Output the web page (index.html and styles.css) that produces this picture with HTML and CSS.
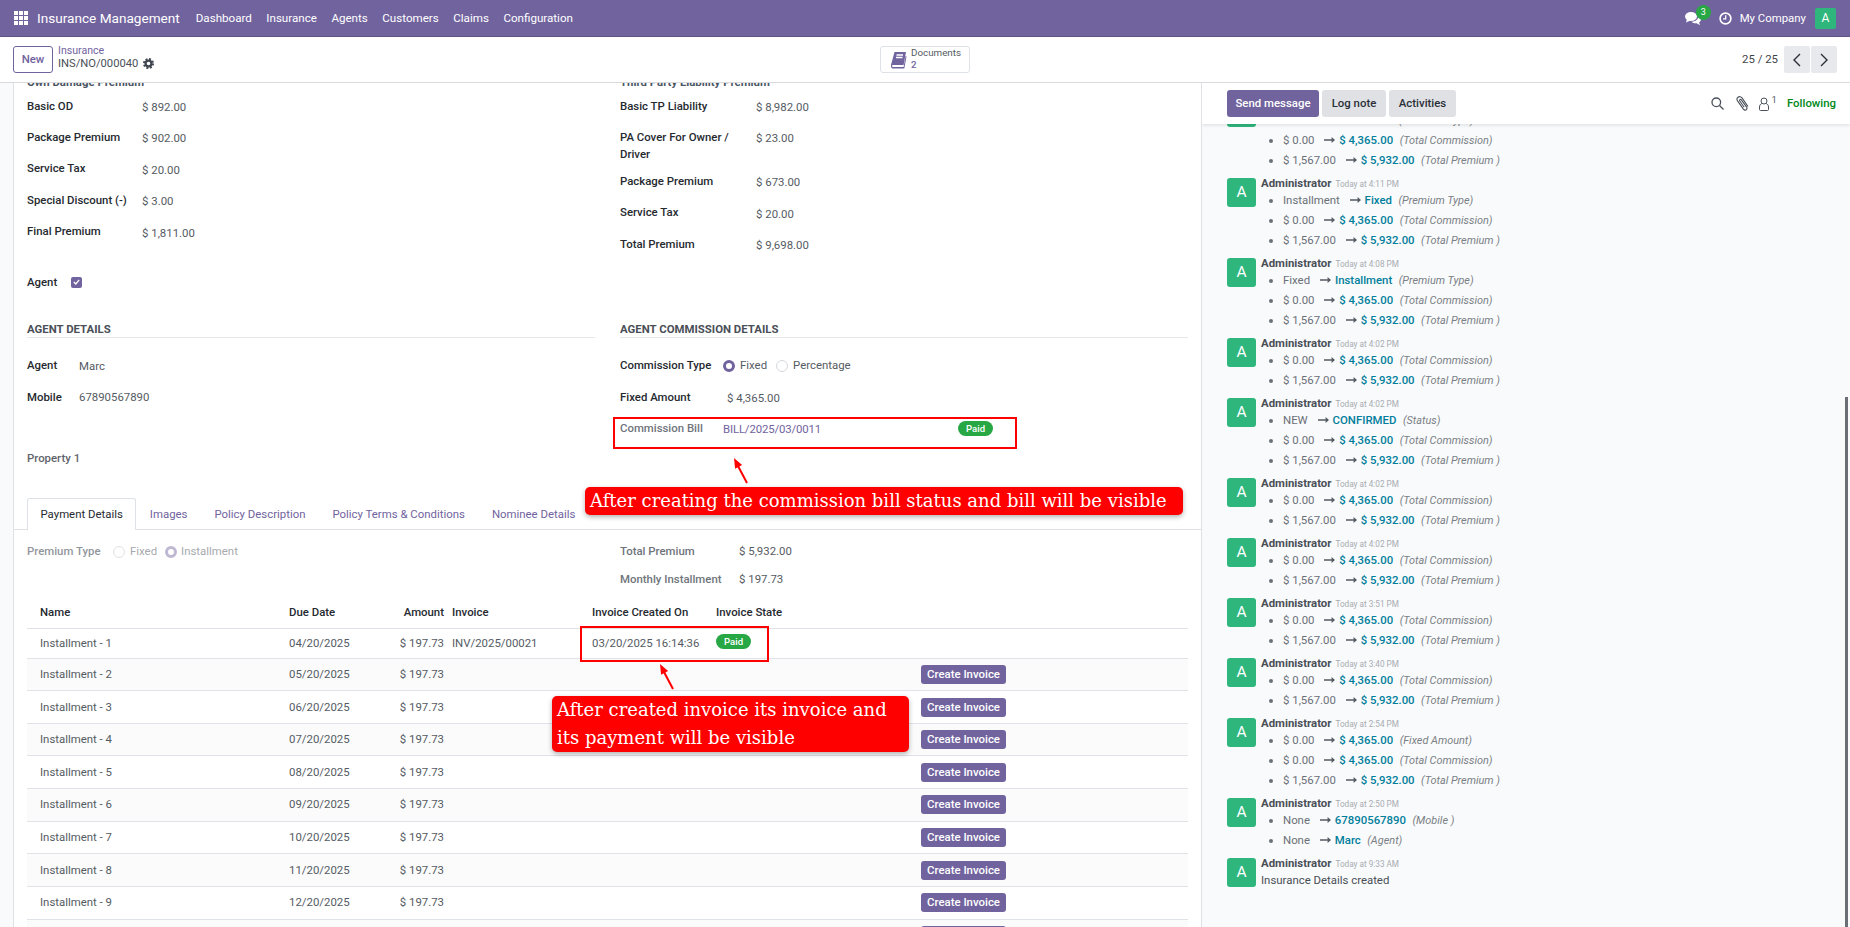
FILE: index.html
```html
<!DOCTYPE html>
<html lang="en">
<head>
  <meta charset="UTF-8">
  <title>Insurance Management</title>
  <link rel="stylesheet" href="styles.css">
</head>
<body>
  <svg class="defs" width="0" height="0">
    <symbol id="arr" viewBox="0 0 11 8"><path d="M0 3.2h7.6V1L11 4 7.6 7V4.8H0z" fill="currentColor"/></symbol>
    <symbol id="pointer" viewBox="0 0 20 30"><path d="M17 27 8 10" stroke="#f00" stroke-width="2" fill="none"/><path d="M4 2 12.1 9.1 5.1 12.7z" fill="#f00"/></symbol>
  </svg>

  <header class="navbar">
    <svg class="apps" width="14" height="14" viewBox="0 0 14 14" fill="#fff">
      <rect width="4" height="4"/><rect x="5" width="4" height="4"/><rect x="10" width="4" height="4"/>
      <rect y="5" width="4" height="4"/><rect x="5" y="5" width="4" height="4"/><rect x="10" y="5" width="4" height="4"/>
      <rect y="10" width="4" height="4"/><rect x="5" y="10" width="4" height="4"/><rect x="10" y="10" width="4" height="4"/>
    </svg>
    <span class="brand">Insurance Management</span>
    <nav class="menu">
      <a>Dashboard</a><a>Insurance</a><a>Agents</a><a>Customers</a><a>Claims</a><a>Configuration</a>
    </nav>
    <div class="systray">
      <span class="chat-icon">
        <svg width="16" height="15" viewBox="0 0 16 15" fill="#fff"><ellipse cx="6" cy="5.5" rx="6" ry="4.6"/><path d="M2 8 1 11.5 5.5 9.5z"/><path d="M13.2 4.6c1.7.8 2.8 2.2 2.8 3.7 0 1.3-.7 2.4-1.9 3.2l.9 2.7-3.4-1.9c-2 .2-3.9-.5-5-1.6 3.7.1 7-2 6.6-6.1z"/></svg>
        <b class="chat-badge">3</b>
      </span>
      <svg class="clock" width="13" height="13" viewBox="0 0 13 13" fill="none" stroke="#fff"><circle cx="6.5" cy="6.5" r="5.4" stroke-width="1.6"/><path d="M6.7 3.2v3.6H4" stroke-width="1.3"/></svg>
      <span class="company">My Company</span>
      <span class="user-avatar">A</span>
    </div>
  </header>

  <div class="control-panel">
    <div class="cp-left">
      <button class="btn-new">New</button>
      <div class="crumbs">
        <a>Insurance</a>
        <span class="crumb-current">INS/NO/000040
          <svg class="gear" width="11" height="11" viewBox="0 0 12 12"><circle cx="6" cy="6" r="3.2" fill="none" stroke="#3f4650" stroke-width="2.4"/><circle cx="6" cy="6" r="4.9" fill="none" stroke="#3f4650" stroke-width="2.2" stroke-dasharray="2.1 1.75"/></svg>
        </span>
      </div>
    </div>
    <button class="stat-btn">
      <svg width="16" height="18" viewBox="0 0 16 18"><path d="M3.5 1H15l-2.4 13H2.2C.6 14 .4 15.8 2 16h10.6l2-11 .9.5-2.2 12H2.2C-.2 17.500-.6 14 .4 12.500z" fill="#71639e"/><path d="M5.500 4h6.500M5 6.500h6.500" stroke="#fff" stroke-width="1.3"/></svg>
      <span class="stat-text"><span>Documents</span><b>2</b></span>
    </button>
    <div class="pager">
      <span>25 / 25</span>
      <div class="pager-btns">
        <button><svg width="8" height="14" viewBox="0 0 8 14" fill="none" stroke="#2b3038" stroke-width="1.4"><path d="M7 1 1 7l6 6"/></svg></button>
        <button><svg width="8" height="14" viewBox="0 0 8 14" fill="none" stroke="#2b3038" stroke-width="1.4"><path d="m1 1 6 6-6 6"/></svg></button>
      </div>
    </div>
  </div>

  <main class="main">
    <section class="sheet">
      <div class="cols premium-cols">
        <div>
          <h3 class="group-title">Own Damage Premium</h3>
          <div class="field"><label class="w-left">Basic OD</label><span class="value">$ 892.00</span></div>
          <div class="field"><label class="w-left">Package Premium</label><span class="value">$ 902.00</span></div>
          <div class="field"><label class="w-left">Service Tax</label><span class="value">$ 20.00</span></div>
          <div class="field"><label class="w-left">Special Discount (-)</label><span class="value">$ 3.00</span></div>
          <div class="field"><label class="w-left">Final Premium</label><span class="value">$ 1,811.00</span></div>
        </div>
        <div>
          <h3 class="group-title">Third Party Liability Premium</h3>
          <div class="field"><label class="w-right">Basic TP Liability</label><span class="value">$ 8,982.00</span></div>
          <div class="field field-tall"><label class="w-right">PA Cover For Owner / Driver</label><span class="value">$ 23.00</span></div>
          <div class="field"><label class="w-right">Package Premium</label><span class="value">$ 673.00</span></div>
          <div class="field"><label class="w-right">Service Tax</label><span class="value">$ 20.00</span></div>
          <div class="field"><label class="w-right">Total Premium</label><span class="value">$ 9,698.00</span></div>
        </div>
      </div>

      <div class="agent-toggle">
        <label>Agent</label>
        <span class="check"><svg width="7" height="6" viewBox="0 0 7 6" fill="none" stroke="#fff" stroke-width="1.3"><path d="m.8 3 2 2L6.200.8"/></svg></span>
      </div>

      <div class="cols agent-cols">
        <div>
          <h4 class="section-title">AGENT DETAILS</h4>
          <div class="field field-agent"><label class="w-agent">Agent</label><span class="value">Marc</span></div>
          <div class="field field-agent"><label class="w-agent">Mobile</label><span class="value">67890567890</span></div>
        </div>
        <div>
          <h4 class="section-title">AGENT COMMISSION DETAILS</h4>
          <div class="field field-agent radio-field">
            <label class="w-radio">Commission Type</label>
            <span class="radio on"></span><span class="radio-text">Fixed</span>
            <span class="radio"></span><span class="radio-text">Percentage</span>
          </div>
          <div class="field field-agent"><label class="w-comm">Fixed Amount</label><span class="value">$ 4,365.00</span></div>
          <div class="field field-agent bill-row">
            <span class="muted-label">Commission Bill</span>
            <a class="bill-link">BILL/2025/03/0011</a>
            <span class="paid">Paid</span>
          </div>
        </div>
      </div>

      <div class="property">Property 1</div>

      <div class="tabs">
        <a class="tab active">Payment Details</a>
        <a class="tab">Images</a>
        <a class="tab">Policy Description</a>
        <a class="tab">Policy Terms &amp; Conditions</a>
        <a class="tab">Nominee Details</a>
      </div>

      <div class="cols payment-cols">
        <div class="radio-field premium-type">
          <span class="muted-label">Premium Type</span>
          <span class="radio"></span><span class="radio-text">Fixed</span>
          <span class="radio on"></span><span class="radio-text">Installment</span>
        </div>
        <div>
          <div class="summary"><span class="muted-label">Total Premium</span><span class="value">$ 5,932.00</span></div>
          <div class="summary"><span class="muted-label">Monthly Installment</span><span class="value">$ 197.73</span></div>
        </div>
      </div>

      <table class="lines">
        <colgroup><col class="c-name"><col class="c-date"><col class="c-amount"><col class="c-inv"><col class="c-created"><col class="c-state"><col></colgroup>
        <thead>
          <tr><th>Name</th><th>Due Date</th><th class="num">Amount</th><th>Invoice</th><th>Invoice Created On</th><th>Invoice State</th><th></th></tr>
        </thead>
        <tbody>
          <tr class="first"><td>Installment - 1</td><td>04/20/2025</td><td class="num">$ 197.73</td><td>INV/2025/00021</td><td>03/20/2025 16:14:36</td><td><span class="paid">Paid</span></td><td></td></tr>
          <tr><td>Installment - 2</td><td>05/20/2025</td><td class="num">$ 197.73</td><td></td><td></td><td></td><td><button class="create">Create Invoice</button></td></tr>
          <tr><td>Installment - 3</td><td>06/20/2025</td><td class="num">$ 197.73</td><td></td><td></td><td></td><td><button class="create">Create Invoice</button></td></tr>
          <tr><td>Installment - 4</td><td>07/20/2025</td><td class="num">$ 197.73</td><td></td><td></td><td></td><td><button class="create">Create Invoice</button></td></tr>
          <tr><td>Installment - 5</td><td>08/20/2025</td><td class="num">$ 197.73</td><td></td><td></td><td></td><td><button class="create">Create Invoice</button></td></tr>
          <tr><td>Installment - 6</td><td>09/20/2025</td><td class="num">$ 197.73</td><td></td><td></td><td></td><td><button class="create">Create Invoice</button></td></tr>
          <tr><td>Installment - 7</td><td>10/20/2025</td><td class="num">$ 197.73</td><td></td><td></td><td></td><td><button class="create">Create Invoice</button></td></tr>
          <tr><td>Installment - 8</td><td>11/20/2025</td><td class="num">$ 197.73</td><td></td><td></td><td></td><td><button class="create">Create Invoice</button></td></tr>
          <tr><td>Installment - 9</td><td>12/20/2025</td><td class="num">$ 197.73</td><td></td><td></td><td></td><td><button class="create">Create Invoice</button></td></tr>
          <tr><td>Installment - 10</td><td>01/20/2026</td><td class="num">$ 197.73</td><td></td><td></td><td></td><td><button class="create">Create Invoice</button></td></tr>
        </tbody>
      </table>
    </section>

    <aside class="chatter">
      <div class="chatter-top">
        <button class="chat-btn primary btn-send">Send message</button>
        <button class="chat-btn btn-log">Log note</button>
        <button class="chat-btn btn-act">Activities</button>
        <div class="chatter-tools">
          <svg width="13" height="13" viewBox="0 0 13 13" fill="none" stroke="#4b515a" stroke-width="1.3"><circle cx="5.300" cy="5.300" r="4.300"/><path d="m8.500 8.500 4 4"/></svg>
          <svg class="clip" width="13" height="15" viewBox="0 0 13 15" fill="none" stroke="#4b515a" stroke-width="1.100"><path d="M12 10.500 6 1.900C5 .5 3.300.3 2.100 1.200.9 2.100.7 3.700 1.700 5.100l5.700 8c.8 1 1.900 1.200 2.800.6.900-.7 1-1.800.3-2.800L5.300 3.900c-.4-.5-1-.6-1.400-.3-.4.300-.5.900-.1 1.400l4.400 6.200"/></svg>
          <span class="followers"><svg width="10" height="14" viewBox="0 0 10 14" fill="none" stroke="#4b515a" stroke-width="1"><circle cx="5" cy="4" r="3"/><path d="M2.800 6.500C1.400 7.200.5 8.200.5 10v2.500c0 .6.400 1 1 1h7c.6 0 1-.4 1-1V10c0-1.800-.9-2.800-2.300-3.500"/></svg><sup>1</sup></span>
          <span class="following">Following</span>
        </div>
      </div>

      <div class="thread-scroll">
        <div class="thread">
          <article class="msg">
            <span class="msg-avatar">A</span>
            <div class="msg-body">
              <div class="msg-head"><b>Administrator</b><time>Today at 4:15 PM</time></div>
              <ul>
                <li>Fixed <svg class="arrow"><use href="#arr"/></svg><em>Installment</em><i>(Premium Type)</i></li>
                <li>$ 0.00 <svg class="arrow"><use href="#arr"/></svg><em>$ 4,365.00</em><i>(Total Commission)</i></li>
                <li>$ 1,567.00 <svg class="arrow"><use href="#arr"/></svg><em>$ 5,932.00</em><i>(Total Premium )</i></li>
              </ul>
            </div>
          </article>
          <article class="msg">
            <span class="msg-avatar">A</span>
            <div class="msg-body">
              <div class="msg-head"><b>Administrator</b><time>Today at 4:11 PM</time></div>
              <ul>
                <li>Installment <svg class="arrow"><use href="#arr"/></svg><em>Fixed</em><i>(Premium Type)</i></li>
                <li>$ 0.00 <svg class="arrow"><use href="#arr"/></svg><em>$ 4,365.00</em><i>(Total Commission)</i></li>
                <li>$ 1,567.00 <svg class="arrow"><use href="#arr"/></svg><em>$ 5,932.00</em><i>(Total Premium )</i></li>
              </ul>
            </div>
          </article>
          <article class="msg">
            <span class="msg-avatar">A</span>
            <div class="msg-body">
              <div class="msg-head"><b>Administrator</b><time>Today at 4:08 PM</time></div>
              <ul>
                <li>Fixed <svg class="arrow"><use href="#arr"/></svg><em>Installment</em><i>(Premium Type)</i></li>
                <li>$ 0.00 <svg class="arrow"><use href="#arr"/></svg><em>$ 4,365.00</em><i>(Total Commission)</i></li>
                <li>$ 1,567.00 <svg class="arrow"><use href="#arr"/></svg><em>$ 5,932.00</em><i>(Total Premium )</i></li>
              </ul>
            </div>
          </article>
          <article class="msg">
            <span class="msg-avatar">A</span>
            <div class="msg-body">
              <div class="msg-head"><b>Administrator</b><time>Today at 4:02 PM</time></div>
              <ul>
                <li>$ 0.00 <svg class="arrow"><use href="#arr"/></svg><em>$ 4,365.00</em><i>(Total Commission)</i></li>
                <li>$ 1,567.00 <svg class="arrow"><use href="#arr"/></svg><em>$ 5,932.00</em><i>(Total Premium )</i></li>
              </ul>
            </div>
          </article>
          <article class="msg">
            <span class="msg-avatar">A</span>
            <div class="msg-body">
              <div class="msg-head"><b>Administrator</b><time>Today at 4:02 PM</time></div>
              <ul>
                <li>NEW <svg class="arrow"><use href="#arr"/></svg><em>CONFIRMED</em><i>(Status)</i></li>
                <li>$ 0.00 <svg class="arrow"><use href="#arr"/></svg><em>$ 4,365.00</em><i>(Total Commission)</i></li>
                <li>$ 1,567.00 <svg class="arrow"><use href="#arr"/></svg><em>$ 5,932.00</em><i>(Total Premium )</i></li>
              </ul>
            </div>
          </article>
          <article class="msg">
            <span class="msg-avatar">A</span>
            <div class="msg-body">
              <div class="msg-head"><b>Administrator</b><time>Today at 4:02 PM</time></div>
              <ul>
                <li>$ 0.00 <svg class="arrow"><use href="#arr"/></svg><em>$ 4,365.00</em><i>(Total Commission)</i></li>
                <li>$ 1,567.00 <svg class="arrow"><use href="#arr"/></svg><em>$ 5,932.00</em><i>(Total Premium )</i></li>
              </ul>
            </div>
          </article>
          <article class="msg">
            <span class="msg-avatar">A</span>
            <div class="msg-body">
              <div class="msg-head"><b>Administrator</b><time>Today at 4:02 PM</time></div>
              <ul>
                <li>$ 0.00 <svg class="arrow"><use href="#arr"/></svg><em>$ 4,365.00</em><i>(Total Commission)</i></li>
                <li>$ 1,567.00 <svg class="arrow"><use href="#arr"/></svg><em>$ 5,932.00</em><i>(Total Premium )</i></li>
              </ul>
            </div>
          </article>
          <article class="msg">
            <span class="msg-avatar">A</span>
            <div class="msg-body">
              <div class="msg-head"><b>Administrator</b><time>Today at 3:51 PM</time></div>
              <ul>
                <li>$ 0.00 <svg class="arrow"><use href="#arr"/></svg><em>$ 4,365.00</em><i>(Total Commission)</i></li>
                <li>$ 1,567.00 <svg class="arrow"><use href="#arr"/></svg><em>$ 5,932.00</em><i>(Total Premium )</i></li>
              </ul>
            </div>
          </article>
          <article class="msg">
            <span class="msg-avatar">A</span>
            <div class="msg-body">
              <div class="msg-head"><b>Administrator</b><time>Today at 3:40 PM</time></div>
              <ul>
                <li>$ 0.00 <svg class="arrow"><use href="#arr"/></svg><em>$ 4,365.00</em><i>(Total Commission)</i></li>
                <li>$ 1,567.00 <svg class="arrow"><use href="#arr"/></svg><em>$ 5,932.00</em><i>(Total Premium )</i></li>
              </ul>
            </div>
          </article>
          <article class="msg">
            <span class="msg-avatar">A</span>
            <div class="msg-body">
              <div class="msg-head"><b>Administrator</b><time>Today at 2:54 PM</time></div>
              <ul>
                <li>$ 0.00 <svg class="arrow"><use href="#arr"/></svg><em>$ 4,365.00</em><i>(Fixed Amount)</i></li>
                <li>$ 0.00 <svg class="arrow"><use href="#arr"/></svg><em>$ 4,365.00</em><i>(Total Commission)</i></li>
                <li>$ 1,567.00 <svg class="arrow"><use href="#arr"/></svg><em>$ 5,932.00</em><i>(Total Premium )</i></li>
              </ul>
            </div>
          </article>
          <article class="msg">
            <span class="msg-avatar">A</span>
            <div class="msg-body">
              <div class="msg-head"><b>Administrator</b><time>Today at 2:50 PM</time></div>
              <ul>
                <li>None <svg class="arrow"><use href="#arr"/></svg><em>67890567890</em><i>(Mobile )</i></li>
                <li>None <svg class="arrow"><use href="#arr"/></svg><em>Marc</em><i>(Agent)</i></li>
              </ul>
            </div>
          </article>
          <article class="msg">
            <span class="msg-avatar">A</span>
            <div class="msg-body">
              <div class="msg-head"><b>Administrator</b><time>Today at 9:33 AM</time></div>
              <p>Insurance Details created</p>
            </div>
          </article>
        </div>
      </div>
      <span class="scrollbar"></span>
    </aside>
  </main>

  <!-- red annotations drawn over the screenshot -->
  <div class="mark mark-bill"></div>
  <svg class="pointer pointer-bill"><use href="#pointer"/></svg>
  <div class="note note-bill">After creating the commission bill status and bill will be visible</div>
  <div class="mark mark-invoice"></div>
  <svg class="pointer pointer-invoice"><use href="#pointer"/></svg>
  <div class="note note-invoice">After created invoice its invoice and<br>its payment will be visible</div>
</body>
</html>
```

FILE: styles.css
```css
:root {
  --purple: #71639e;
  --line: #dee2e6;
  --label: #262a30;
  --text: #555b63;
  --teal: #017e9c;
  --green: #2fb67d;
}

* {
  box-sizing: border-box;
}

html,
body {
  height: 100%;
}

body {
  position: relative;
  display: flex;
  flex-direction: column;
  margin: 0;
  overflow: hidden;
  background: #f9fafb;
  color: var(--text);
  font-family: Roboto, "Noto Sans", sans-serif;
  font-size: 11.4px;
  line-height: 17px;
}

button {
  font: inherit;
  border: none;
  cursor: pointer;
}

.defs {
  position: absolute;
}

/* top bar */
.navbar {
  display: flex;
  align-items: center;
  flex: 0 0 37px;
  padding: 0 14px;
  background: var(--purple);
  border-bottom: 1px solid #5f5387;
  color: #fff;
}

.brand {
  margin-left: 9px;
  font-size: 13.6px;
}

.menu {
  display: flex;
  gap: 14.5px;
  margin-left: 16px;
  font-size: 11.6px;
}

.systray {
  display: flex;
  align-items: center;
  margin-left: auto;
}

.chat-icon {
  position: relative;
  display: flex;
}

.chat-badge {
  position: absolute;
  top: -6px;
  left: 11px;
  width: 15px;
  height: 15px;
  border-radius: 50%;
  background: #28a745;
  font-size: 9px;
  font-weight: 400;
  line-height: 15px;
  text-align: center;
}

.clock {
  margin-left: 18px;
}

.company {
  margin-left: 8px;
  font-size: 11.4px;
}

.user-avatar {
  width: 21px;
  height: 21px;
  margin-left: 9px;
  border-radius: 2px;
  background: var(--green);
  font-size: 12px;
  line-height: 21px;
  text-align: center;
}

/* control panel */
.control-panel {
  display: grid;
  grid-template-columns: 1fr auto 1fr;
  align-items: center;
  flex: 0 0 46px;
  padding: 0 13px;
  background: #fff;
  border-bottom: 1px solid #d8dadd;
  position: relative;
  z-index: 2;
}

.cp-left {
  display: flex;
  align-items: center;
  gap: 5px;
}

.btn-new {
  width: 40px;
  height: 27px;
  padding: 0;
  background: #fff;
  border: 1px solid var(--purple);
  border-radius: 3px;
  color: var(--purple);
  font-weight: 500;
}

.crumbs {
  display: flex;
  flex-direction: column;
  margin-top: -6px;
  line-height: 13px;
}

.crumbs a {
  color: var(--purple);
  font-size: 10.600px;
}

.crumb-current {
  display: flex;
  align-items: center;
  gap: 5px;
  color: #4a4f57;
  font-size: 11.200px;
}

.stat-btn {
  display: flex;
  align-items: center;
  gap: 4px;
  width: 90px;
  height: 27px;
  padding: 0 0 0 10px;
  background: #fff;
  border: 1px solid var(--line);
  border-radius: 3px;
  text-align: left;
}

.stat-text {
  display: flex;
  flex-direction: column;
  margin-top: -2px;
  color: #555b63;
  font-size: 9.800px;
  line-height: 11.500px;
}

.stat-text b {
  color: var(--purple);
  font-weight: 500;
}

.pager {
  display: flex;
  align-items: center;
  justify-content: flex-end;
  gap: 6px;
  color: #3f444c;
  padding-right: 0;
}

.pager-btns {
  display: flex;
  gap: 1px;
}

.pager-btns button {
  display: flex;
  align-items: center;
  justify-content: center;
  width: 26px;
  height: 27px;
  padding: 0;
  background: #e7e9ed;
  border-radius: 2px;
}

/* main split */
.main {
  display: flex;
  flex: 1;
  min-height: 0;
}

.sheet {
  flex: 0 0 1189px;
  margin-left: 13px;
  background: #fff;
  border-left: 1px solid var(--line);
  border-right: 1px solid var(--line);
  overflow: hidden;
}

.cols {
  display: grid;
  grid-template-columns: 568px 568px;
  gap: 25px;
  padding-left: 13px;
}

.premium-cols {
  margin-top: -9px;
}

.group-title {
  height: 17px;
  margin: 0 0 6.500px;
  color: #4b5563;
  font-size: 11.400px;
  font-weight: 700;
}

.field {
  display: flex;
  height: 31.400px;
}

.field-tall {
  height: 44px;
}

.field label {
  flex: none;
  color: var(--label);
  font-weight: 500;
}

.w-left {
  width: 115px;
}

.w-right {
  width: 136px;
  padding-right: 9px;
}

.w-agent {
  width: 52px;
}

.w-agent + .value {
  padding-top: .5px;
}

.w-comm {
  width: 107px;
}

.w-radio {
  width: 103px;
}

.value {
  padding-top: 1.500px;
}

.agent-toggle {
  display: flex;
  align-items: flex-start;
  gap: 14px;
  height: 31px;
  margin: 6.500px 0 0 13px;
}

.agent-toggle label {
  width: 30px;
  color: var(--label);
  font-weight: 500;
}

.check {
  display: flex;
  align-items: center;
  justify-content: center;
  width: 11px;
  height: 11px;
  margin-top: 3px;
  border-radius: 2px;
  background: var(--purple);
}

.agent-cols {
  margin-top: 15.500px;
}

.section-title {
  height: 17px;
  margin: 0 0 19px;
  box-sizing: content-box;
  border-bottom: 1px solid #e5e7ea;
  color: #4a4f57;
  font-size: 11.400px;
  font-weight: 700;
  line-height: 18.500px;
}

.field-agent {
  height: 31.500px;
}

.radio-field {
  display: flex;
  align-items: flex-start;
}

.radio {
  flex: none;
  width: 12px;
  height: 12px;
  margin-top: 2.500px;
  border: 1px solid #d5d8dc;
  border-radius: 50%;
  background: #fff;
}

.radio.on {
  border: 3px solid var(--purple);
}

.radio-text {
  margin: 0 9px 0 5px;
}

.bill-row .muted-label {
  width: 103px;
}

.muted-label {
  flex: none;
  color: #6f747b;
  font-weight: 500;
}

.bill-link {
  width: 235px;
  color: var(--purple);
  padding-top: 1px;
  letter-spacing: -.15px;
}

.paid {
  display: inline-block;
  width: 35px;
  height: 15px;
  border-radius: 8px;
  background: #28a745;
  color: #fff;
  font-size: 9.600px;
  font-weight: 500;
  line-height: 15px;
  text-align: center;
  vertical-align: top;
}

.bill-row .paid {
  margin-top: 1px;
}

.lines .paid {
  margin-top: -1px;
}

.property {
  margin: -1.500px 0 0 13px;
  color: #5f646b;
  font-weight: 500;
}

.tabs {
  display: flex;
  height: 32px;
  margin-top: 31px;
  padding-left: 13px;
  border-bottom: 1px solid var(--line);
}

.tab {
  height: 32px;
  padding: 7px 12.500px 0;
  color: var(--purple);
  border: 1px solid transparent;
  border-bottom: none;
}

.tab.active {
  background: #fff;
  color: var(--label);
  border-color: var(--line);
  border-radius: 3px 3px 0 0;
}

.payment-cols {
  margin-top: 13px;
}

.premium-type {
  opacity: .75;
}

.premium-type .muted-label {
  width: 86px;
}

.premium-type .radio.on {
  opacity: .6;
}

.premium-type .radio-text {
  opacity: .7;
  margin-right: 8px;
}

.premium-type .radio.on + .radio-text {
  margin-left: 4px;
}

.summary {
  display: flex;
  height: 28px;
}

.summary .muted-label {
  width: 119px;
}

.summary .value {
  padding-top: 0;
}

.lines {
  width: 1161px;
  margin: -1px 0 0 13px;
  border-collapse: collapse;
  table-layout: fixed;
}

.c-name {
  width: 254px;
}

.c-date {
  width: 109px;
}

.c-amount {
  width: 54px;
}

.c-inv {
  width: 140px;
}

.c-created {
  width: 124px;
}

.c-state {
  width: 205px;
}

.lines th,
.lines td {
  padding: 0 0 0 8px;
  border-bottom: 1px solid #dfe2e6;
  text-align: left;
}

.lines th {
  height: 30px;
  color: var(--label);
  font-weight: 500;
}

.lines td {
  height: 32.625px;
}

.lines tr.first td {
  height: 30px;
}

.lines th:first-child,
.lines td:first-child {
  padding-left: 13px;
}

.lines .num {
  padding: 0;
  text-align: right;
}

.lines tbody tr:nth-child(even) {
  background: #fbfbfb;
}

.create {
  display: block;
  width: 85px;
  height: 19px;
  padding: 0;
  border-radius: 3px;
  background: var(--purple);
  color: #fff;
  font-size: 11.400px;
  font-weight: 500;
}

/* chatter */
.chatter {
  position: relative;
  display: flex;
  flex-direction: column;
  flex: 1;
  min-width: 0;
  overflow: hidden;
}

.chatter-top {
  position: relative;
  z-index: 1;
  display: flex;
  align-items: center;
  flex: none;
  gap: 3px;
  height: 41px;
  padding: 0 14px 0 25px;
  background: #fff;
  box-shadow: 0 1px 4px rgba(0, 0, 0, .12);
}

.chat-btn {
  height: 27px;
  padding: 0;
  border-radius: 3px;
  background: #dfe1e5;
  color: #2b3038;
  font-weight: 500;
}

.chat-btn.primary {
  background: var(--purple);
  color: #fff;
}

.btn-send {
  width: 92px;
}

.btn-log {
  width: 64px;
}

.btn-act {
  width: 67px;
}

.chatter-tools {
  display: flex;
  align-items: center;
  margin-left: auto;
}

.clip {
  margin-left: 12px;
}

.followers {
  display: flex;
  margin-left: 10px;
}

.followers sup {
  margin: -6px 0 0 3px;
  font-size: 9.500px;
}

.following {
  margin-left: 10px;
  color: #008818;
  font-weight: 500;
}

.thread-scroll {
  flex: 1;
  min-height: 0;
  overflow: hidden;
}

.thread {
  margin-top: -26px;
  padding-left: 25px;
}

.msg {
  display: flex;
  gap: 5px;
}

.msg-avatar {
  flex: none;
  width: 29px;
  height: 29px;
  border-radius: 3px;
  background: var(--green);
  color: #fff;
  font-size: 15.500px;
  line-height: 29px;
  text-align: center;
}

.msg-body {
  margin-top: -2px;
  padding-bottom: 8px;
}

.msg-head {
  display: flex;
  align-items: baseline;
  gap: 4px;
  height: 14px;
  line-height: 14px;
}

.msg-head b {
  color: #4a4f57;
  font-weight: 700;
}

.msg-head time {
  color: #a8acb2;
  font-size: 8.200px;
}

.msg ul {
  margin: 0;
  padding-left: 22px;
}

.msg li {
  height: 20px;
  line-height: 20px;
  color: #6a7078;
}

.msg li em {
  margin-right: 6.500px;
  color: var(--teal);
  font-style: normal;
  font-weight: 500;
}

.msg li i {
  color: #7a7f86;
  font-size: 10.900px;
}

.arrow {
  width: 11px;
  height: 8px;
  margin: 0 4px 0 7px;
  color: #555b63;
}

.msg p {
  margin: 0;
  height: 20px;
  line-height: 20px;
  color: #4a4f57;
}

.scrollbar {
  position: absolute;
  top: 314px;
  bottom: 0;
  right: 2px;
  width: 3px;
  background: #6b6f75;
}

/* annotations */
.mark {
  position: absolute;
  border: 2px solid #f00;
}

.mark-bill {
  left: 613px;
  top: 417px;
  width: 404px;
  height: 32px;
}

.mark-invoice {
  left: 580px;
  top: 626px;
  width: 189px;
  height: 36px;
}

.pointer {
  position: absolute;
  width: 20px;
  height: 30px;
}

.pointer-bill {
  left: 730px;
  top: 456px;
}

.pointer-invoice {
  left: 656px;
  top: 662px;
}

.note {
  position: absolute;
  padding: 0 5px;
  border-radius: 5px;
  background: #f00;
  box-shadow: 0 2px 5px rgba(0, 0, 0, .3);
  color: #fff;
  font-family: "DejaVu Serif", serif;
  font-size: 18px;
}

.note-bill {
  left: 585px;
  top: 487px;
  width: 598px;
  height: 28px;
  line-height: 27px;
}

.note-invoice {
  left: 552px;
  top: 696px;
  width: 357px;
  height: 56px;
  line-height: 28px;
}
```
